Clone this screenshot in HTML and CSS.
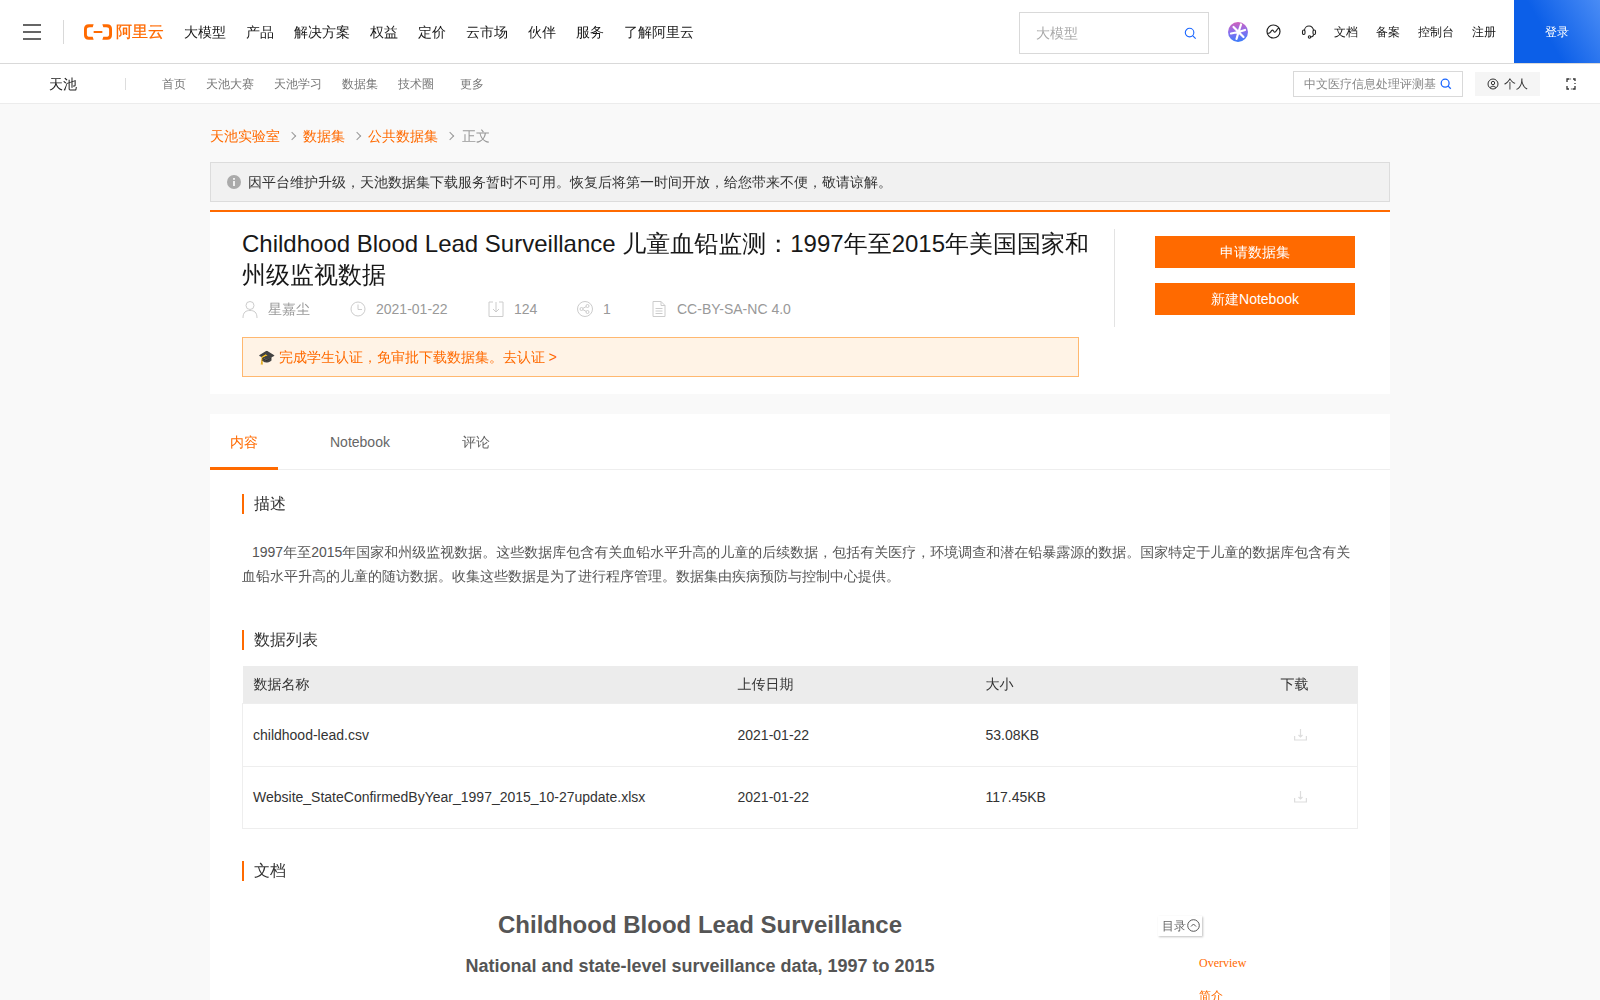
FILE: index.html
```html
<!DOCTYPE html>
<html lang="zh-CN">
<head>
<meta charset="utf-8">
<title>Childhood Blood Lead Surveillance</title>
<link rel="stylesheet" href="styles.css">
</head>
<body>
<header class="topbar">
  <button class="burger" aria-label="menu"><span></span><span></span><span></span></button>
  <i class="vline"></i>
  <a class="logo">
    <svg width="29" height="16" viewBox="0 0 29 16"><path d="M10 0H5Q0 0 0 5V11Q0 16 5 16H10L9 13H6Q3 13 3 10.500V5.500Q3 3 6 3H9Z M19 0H24Q29 0 29 5V11Q29 16 24 16H19L20 13H23Q26 13 26 10.500V5.500Q26 3 23 3H20Z M10 7H19V9H10Z" fill="#ff6a00"/></svg>
    <span>阿里云</span>
  </a>
  <nav class="mainnav">
    <a>大模型</a><a>产品</a><a>解决方案</a><a>权益</a><a>定价</a><a>云市场</a><a>伙伴</a><a>服务</a><a>了解阿里云</a>
  </nav>
  <div class="topsearch">
    <span>大模型</span>
    <svg width="13" height="13" viewBox="0 0 14 14" fill="none" stroke="#1a66ff" stroke-width="1.2"><circle cx="6" cy="6" r="4.6"/><path d="M9.5 9.5L12.6 12.6"/></svg>
  </div>
  <div class="topright">
    <svg class="ic-star" width="20" height="20" viewBox="0 0 20 20"><defs><linearGradient id="g" x1="0.35" y1="0" x2="0.45" y2="1"><stop offset="0" stop-color="#d161bb"/><stop offset=".5" stop-color="#8a70ee"/><stop offset="1" stop-color="#3a7dfa"/></linearGradient></defs><circle cx="10" cy="10" r="10" fill="url(#g)"/><path d="M10.500 10L13 2.500M10.500 10L17 8M10.500 10L15.500 15M10.500 10L8.500 17M10.500 10L3 11.500M10.500 10L5.500 5" stroke="#fff" stroke-width="2.200" stroke-linecap="round"/></svg>
    <svg class="ic-a" width="15" height="15" viewBox="0 0 15 15" fill="none" stroke="#222" stroke-width="1.200"><circle cx="7.500" cy="7.500" r="6.500"/><path d="M1.500 9.500C3.500 9.500 4.500 8.500 5 7.500S6.500 5.500 7.500 7 9 9 10.500 6.500 12.500 4 13.500 4.500"/></svg>
    <svg class="ic-b" width="16" height="16" viewBox="0 0 16 16" fill="none" stroke="#222" stroke-width="1.100"><path d="M3.500 6.500A4.500 4.500 0 0 1 12.500 6.500"/><rect x="1.500" y="6" width="2.500" height="4.500" rx="1.200"/><rect x="12" y="6" width="2.500" height="4.500" rx="1.200"/><path d="M12.500 10.500Q12.500 13 9.500 13"/><circle cx="8.500" cy="13" r="1.200"/></svg>
    <a class="t1">文档</a><a class="t2">备案</a><a class="t3">控制台</a><a class="t4">注册</a>
  </div>
  <a class="login">登录</a>
</header>

<div class="subbar">
  <a class="brand">天池</a>
  <i class="subline"></i>
  <nav class="subnav"><a>首页</a><a>天池大赛</a><a>天池学习</a><a>数据集</a><a>技术圈</a><a class="more">更多</a></nav>
  <div class="subsearch">
    <span>中文医疗信息处理评测基</span>
    <svg width="12" height="12" viewBox="0 0 14 14" fill="none" stroke="#1a66ff" stroke-width="1.500"><circle cx="6" cy="6" r="4.600"/><path d="M9.500 9.500L12.600 12.600"/></svg>
  </div>
  <a class="personal">
    <svg width="12" height="12" viewBox="0 0 12 12" fill="none" stroke="#333"><circle cx="6" cy="6" r="5"/><circle cx="6" cy="5" r="1.700"/><path d="M3 9.500Q6 6.500 9 9.500"/></svg>
    个人
  </a>
  <svg class="swap" width="10" height="12" viewBox="0 0 10 12"><path d="M3 1H1V4M1 8V11H3M7 1H9V3M9 5V6M9 8V11H7" fill="none" stroke="#333" stroke-width="1.300"/><path d="M3.500 .2L5.500 1L3.500 1.800ZM6.500 10.200L4.500 11L6.500 11.800Z" fill="#333"/></svg>
</div>

<main class="wrap">
  <div class="crumbs">
    <a>天池实验室</a><i class="chev"></i><a>数据集</a><i class="chev"></i><a>公共数据集</a><i class="chev"></i><span>正文</span>
  </div>
  <div class="alert">
    <svg width="14" height="14" viewBox="0 0 14 14"><circle cx="7" cy="7" r="7" fill="#aaa"/><rect x="6.200" y="6" width="1.600" height="5" fill="#fff"/><rect x="6.200" y="3" width="1.600" height="1.800" fill="#fff"/></svg>
    因平台维护升级，天池数据集下载服务暂时不可用。恢复后将第一时间开放，给您带来不便，敬请谅解。
  </div>

  <section class="head">
    <div class="head-main">
      <h1>Childhood Blood Lead Surveillance 儿童血铅监测：1997年至2015年美国国家和州级监视数据</h1>
      <ul class="meta">
        <li class="m-user"><svg width="16" height="18" viewBox="0 0 16 18" fill="none" stroke="#ccc"><circle cx="8" cy="5.500" r="4"/><path d="M1 18C1 12 4 10.500 8 10.500S15 12 15 18"/></svg>星嘉尘</li>
        <li class="m-date"><svg width="16" height="16" viewBox="0 0 16 16" fill="none" stroke="#ccc"><circle cx="8" cy="8" r="7"/><path d="M8 3.500V8.500H12"/></svg>2021-01-22</li>
        <li class="m-dl"><svg width="16" height="16" viewBox="0 0 16 16" fill="none" stroke="#ccc"><path d="M5 1H1V15.500H15V1H11M8 1V11M5 8L8 11L11 8"/></svg>124</li>
        <li class="m-share"><svg width="16" height="16" viewBox="0 0 16 16" fill="none" stroke="#ccc"><circle cx="8" cy="8" r="7.500"/><circle cx="4.500" cy="8" r="1.500"/><circle cx="10.500" cy="5" r="1.500"/><circle cx="10.500" cy="11" r="1.500"/><path d="M6 7.300L9 5.700M6 8.700L9 10.300"/></svg>1</li>
        <li class="m-lic"><svg width="14" height="16" viewBox="0 0 14 16" fill="none" stroke="#ccc"><path d="M1 .5H9L13 4.500V15.500H1ZM9 .5V4.500H13M3.500 7.500H10.500M3.500 10H10.500M3.500 12.500H10.500"/></svg>CC-BY-SA-NC 4.0</li>
      </ul>
      <div class="notice"><span class="cap">🎓</span> 完成学生认证，免审批下载数据集。去认证 &gt;</div>
    </div>
    <div class="head-side">
      <a class="btn">申请数据集</a>
      <a class="btn">新建Notebook</a>
    </div>
  </section>

  <section class="body">
    <div class="tabs"><a class="tab on">内容</a><a class="tab nb">Notebook</a><a class="tab cm">评论</a></div>
    <div class="content">
      <h3 class="sec">描述</h3>
      <p class="desc">1997年至2015年国家和州级监视数据。这些数据库包含有关血铅水平升高的儿童的后续数据，包括有关医疗，环境调查和潜在铅暴露源的数据。国家特定于儿童的数据库包含有关血铅水平升高的儿童的随访数据。收集这些数据是为了进行程序管理。数据集由疾病预防与控制中心提供。</p>
      <h3 class="sec sec2">数据列表</h3>
      <table class="files">
        <thead><tr><th>数据名称</th><th>上传日期</th><th>大小</th><th class="dlh">下载</th></tr></thead>
        <tbody>
          <tr class="first"><td>childhood-lead.csv</td><td>2021-01-22</td><td>53.08KB</td><td class="dlc"><svg width="13" height="12" viewBox="0 0 13 12" fill="none" stroke="#ddd" stroke-width="1.200"><path d="M6.500 0V7.500M4.500 6L6.500 8L8.500 6"/><path d="M.6 7V11H12.400V7" /></svg></td></tr>
          <tr><td>Website_StateConfirmedByYear_1997_2015_10-27update.xlsx</td><td>2021-01-22</td><td>117.45KB</td><td class="dlc"><svg width="13" height="12" viewBox="0 0 13 12" fill="none" stroke="#ddd" stroke-width="1.200"><path d="M6.500 0V7.500M4.500 6L6.500 8L8.500 6"/><path d="M.6 7V11H12.400V7" /></svg></td></tr>
        </tbody>
      </table>
      <h3 class="sec sec3">文档</h3>
      <div class="doc">
        <article class="article">
          <h2>Childhood Blood Lead Surveillance</h2>
          <h4>National and state-level surveillance data, 1997 to 2015</h4>
        </article>
        <aside class="toc">
          <div class="toc-btn">目录<svg width="13" height="13" viewBox="0 0 13 13" fill="none" stroke="#555"><circle cx="6.500" cy="6.500" r="5.800"/><path d="M4 7.500L6.500 5L9 7.500"/></svg></div>
          <a class="toc-a">Overview</a>
          <a class="toc-a toc-b">简介</a>
        </aside>
      </div>
    </div>
  </section>
</main>
</body>
</html>
```
FILE: styles.css
```css
* { box-sizing: border-box; }
html, body { margin: 0; padding: 0; height: 1000px; overflow: hidden; }
body {
  background: #f9f9f9;
  color: #333;
  font: 14px/20px "Liberation Sans", "WenQuanYi Zen Hei", "Noto Sans CJK SC", sans-serif;
}
a { text-decoration: none; color: inherit; }
h1, h2, h3, h4, p, ul { margin: 0; padding: 0; }
ul { list-style: none; }

.topbar {
  height: 64px;
  background: #fff;
  border-bottom: 1px solid #d9d9d9;
  display: flex;
  align-items: center;
  padding-left: 23px;
  color: #181818;
}
.burger {
  width: 18px; height: 16px; padding: 0; border: 0; background: none;
  display: flex; flex-direction: column; justify-content: space-between;
}
.burger span { display: block; height: 2px; background: #666; }
.vline { width: 1px; height: 24px; background: #d9d9d9; margin-left: 22px; }
.logo { display: flex; align-items: center; gap: 4px; margin-left: 20px; width: 80px; flex: none; white-space: nowrap; color: #ff6a00; font-size: 16px; font-weight: 700; -webkit-text-stroke: .3px #ff6a00; }
.mainnav { display: flex; gap: 20px; margin-left: 20px; }
.topsearch {
  margin-left: auto;
  margin-top: 3px;
  width: 190px; height: 42px;
  border: 1px solid #d9d9d9;
  display: flex; align-items: center; justify-content: space-between;
  padding: 0 11px 0 16px;
  color: #aaa;
}
.topright { display: flex; align-items: center; margin-left: 19px; font-size: 12px; width: 286px; line-height: 22px; }
.ic-a { margin-left: 18px; }
.ic-b { margin-left: 20px; }
.t1 { margin-left: 17px; }
.t2, .t3 { margin-left: 18px; }
.t4 { margin-left: 18px; }
.login {
  width: 86px; height: 63px;
  background: linear-gradient(60deg, #0c5fe8 40%, #4a8cf5);
  color: #fff; font-size: 12px;
  display: flex; align-items: center; justify-content: center;
}

.subbar {
  height: 40px;
  background: #fff;
  border-bottom: 1px solid #ececec;
  display: flex;
  align-items: center;
  padding-left: 49px;
  padding-right: 24px;
}
.brand { font-size: 14px; color: #222; width: 76px; }
.subline { width: 1px; height: 12px; background: #ddd; }
.subnav { display: flex; gap: 20px; margin-left: 36px; font-size: 12px; color: #777; line-height: 22px; }
.subnav .more { margin-left: 6px; }
.subsearch {
  margin-left: auto;
  width: 170px; height: 26px;
  border: 1px solid #d9d9d9;
  display: flex; align-items: center; justify-content: space-between;
  padding: 0 10px;
  font-size: 12px; color: #888;
  white-space: nowrap;
  line-height: 22px;
}
.personal {
  margin-left: 12px;
  width: 65px; height: 24px;
  background: #f5f5f5;
  display: flex; align-items: center; justify-content: center; gap: 5px;
  font-size: 12px; color: #333;
  line-height: 22px;
}
.swap { margin-left: 26px; }

.wrap { width: 1180px; margin: 0 auto; }
.crumbs { display: flex; align-items: center; height: 58px; padding-top: 6px; color: #ff6a00; }
.crumbs span { color: #999; margin-left: 1px; }
.chev {
  width: 6px; height: 6px; margin: 0 8px 0 9px;
  border-top: 1px solid #999; border-right: 1px solid #999;
  transform: rotate(45deg);
}
.alert {
  height: 40px;
  background: #f1f1f1;
  border: 1px solid #dcdcdc;
  display: flex; align-items: center; gap: 7px;
  padding-left: 16px;
  color: #333;
}
.head {
  margin-top: 8px;
  height: 184px;
  background: #fff;
  border-top: 2px solid #ff6a00;
  display: flex;
  padding: 16px 0 0 32px;
}
.head-main { width: 872px; }
.head h1 { width: 860px; font-size: 24px; line-height: 31px; font-weight: 400; color: #181818; }
.meta { display: flex; margin-top: 8px; color: #999; align-items: center; height: 22px; }
.meta li { display: flex; align-items: center; gap: 10px; }
.m-user { width: 108px; }
.m-date { width: 138px; }
.m-dl { width: 89px; }
.m-share { width: 75px; }
.m-lic { gap: 11px !important; }
.notice {
  margin-top: 17px;
  width: 837px; height: 40px;
  background: #fff3e6;
  border: 1px solid #ffb870;
  padding: 9px 15px;
  color: #ff6a00;
  line-height: 20px;
}
.cap { color: #333; }
.head-side {
  width: 241px; height: 98px;
  border-left: 1px solid #e3e3e3;
  margin-top: 1px;
  padding: 7px 0 0 40px;
  display: flex; flex-direction: column; gap: 15px;
}
.btn {
  width: 200px; height: 32px;
  background: #ff6a00; color: #fff;
  display: flex; align-items: center; justify-content: center;
}

.body { margin-top: 20px; background: #fff; height: 586px; overflow: hidden; }
.tabs { height: 56px; display: flex; border-bottom: 1px solid #eee; color: #666; }
.tab { height: 56px; display: flex; align-items: center; }
.tab.on { width: 68px; padding: 3px 0 0 20px; color: #ff6a00; border-bottom: 3px solid #ff6a00; }
.tab.nb { margin-left: 52px; width: 132px; }
.content { padding: 24px 32px 0; }
.sec {
  font-size: 16px; font-weight: 400; line-height: 20px; color: #333;
  border-left: 2px solid #ff6a00; padding-left: 10px;
}
.desc { margin-top: 26px; line-height: 24px; color: #555; text-indent: 10px; }
.sec2 { margin-top: 42px; }
.files { margin-top: 16px; width: 1116px; border-collapse: collapse; table-layout: fixed; }
.files th { height: 37px; background: #ececec; font-weight: 400; text-align: left; padding: 0 0 0 10px; color: #333; }
.files th:nth-child(1) { width: 485px; padding-left: 11px; }
.files th:nth-child(2), .files th:nth-child(3) { width: 248px; }
.files td { height: 62px; padding: 0 0 0 10px; color: #333; border-top: 1px solid #eee; border-bottom: 1px solid #eee; }
.files .first td { height: 63px; }
.files td:first-child { border-left: 1px solid #eee; }
.files td:last-child { border-right: 1px solid #eee; }
.files .dlh { padding-left: 57px; }
.files .dlc { padding-left: 70px; }
.files svg { display: block; }
.sec3 { margin-top: 32px; }
.doc { display: flex; margin-top: 24px; }
.article { width: 916px; text-align: center; color: #555; }
.article h2 { margin-top: 2px; font-size: 24px; line-height: 36px; font-weight: 700; }
.article h4 { margin-top: 9px; font-size: 18px; line-height: 28px; font-weight: 700; }
.toc { font-family: "Liberation Serif", "WenQuanYi Zen Hei", "Noto Sans CJK SC", serif; font-size: 12px; color: #ff6a00; }
.toc-btn {
  display: flex; align-items: center; gap: 1px;
  width: 44px; height: 20px; margin: 11px 0 0 0; padding-left: 4px;
  font-family: "Liberation Sans", "WenQuanYi Zen Hei", "Noto Sans CJK SC", sans-serif;
  color: #666; background: #fff;
  box-shadow: 1px 1px 2px rgba(0,0,0,.25);
}
.toc-a { display: block; margin: 19px 0 0 41px; line-height: 16px; }
.toc-b { margin-top: 17px; }
```
